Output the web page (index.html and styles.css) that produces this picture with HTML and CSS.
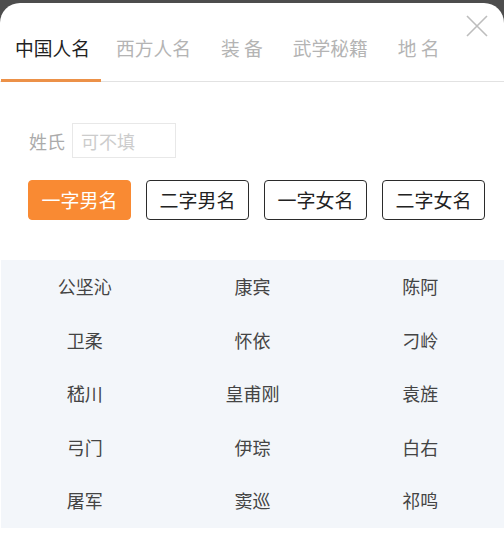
FILE: index.html
```html
<!DOCTYPE html>
<html>
<head>
<meta charset="utf-8">
<title>随机取名</title>
<link rel="stylesheet" href="styles.css">
</head>
<body>
	<div class="sheet">
		<div class="close">
			<svg width="24" height="24" viewBox="0 0 24 24"><path d="M2 2 L22 22 M22 2 L2 22" stroke="#bdbdbd" stroke-width="1.6" fill="none"/></svg>
		</div>

		<div class="tabs">
			<div class="tab active">中国人名</div>
			<div class="tab">西方人名</div>
			<div class="tab">装 备</div>
			<div class="tab">武学秘籍</div>
			<div class="tab">地 名</div>
		</div>

		<div class="surname">
			<span class="label">姓氏</span>
			<input class="field" type="text" placeholder="可不填">
		</div>

		<div class="kinds">
			<div class="kind selected">一字男名</div>
			<div class="kind">二字男名</div>
			<div class="kind">一字女名</div>
			<div class="kind">二字女名</div>
		</div>

		<div class="names">
			<div class="name">公坚沁</div>
			<div class="name">康宾</div>
			<div class="name">陈阿</div>
			<div class="name">卫柔</div>
			<div class="name">怀依</div>
			<div class="name">刁岭</div>
			<div class="name">嵇川</div>
			<div class="name">皇甫刚</div>
			<div class="name">袁旌</div>
			<div class="name">弓门</div>
			<div class="name">伊琮</div>
			<div class="name">白右</div>
			<div class="name">屠军</div>
			<div class="name">窦巡</div>
			<div class="name">祁鸣</div>
		</div>
	</div>
</body>
</html>
```

FILE: styles.css
```css
html, body
   {
   	margin			:  0 ;
   	padding			:  0 ;
   	background		:  #4d4d4d ;
   	font-family		:  "Noto Sans CJK SC", "Noto Sans", sans-serif ;
    }

.sheet
   {
   	position		:  relative ;
   	margin-top		:  3px ;
   	height			:  555px ;
   	background		:  #ffffff ;
   	border-radius		:  20px 20px 0 0 ;
   	overflow		:  hidden ;
    }

.close
   {
   	position		:  absolute ;
   	top			:  11px ;
   	left			:  465px ;
   	width			:  24px ;
   	height			:  24px ;
    }

.close svg
   {
   	display			:  block ;
    }

.tabs
   {
   	display			:  flex ;
   	border-bottom		:  1px solid #e2e2e2 ;
    }

.tab
   {
   	padding			:  32px 15px 18px 15px ;
   	margin-bottom		:  -1px ;
   	line-height		:  26px ;
   	font-size		:  18.75px ;
   	color			:  #b4b4b4 ;
   	border-bottom		:  3px solid transparent ;
   	white-space		:  pre ;
    }

.tab.active
   {
   	padding-left		:  14px ;
   	padding-right		:  11px ;
   	margin-left		:  1px ;
   	color			:  #222222 ;
   	border-bottom-color	:  #ec9148 ;
    }

.surname
   {
   	display			:  flex ;
   	align-items		:  center ;
   	gap			:  7px ;
   	margin			:  41px 0 0 29px ;
    }

.label
   {
   	font-size		:  18px ;
   	color			:  #ababab ;
    }

.field
   {
   	box-sizing		:  border-box ;
   	width			:  104px ;
   	height			:  35px ;
   	margin			:  0 ;
   	padding			:  0 8px ;
   	border			:  1px solid #e8e8e8 ;
   	outline			:  none ;
   	font-family		:  inherit ;
   	font-size		:  18px ;
   	color			:  #333333 ;
    }

.field::placeholder
   {
   	color			:  #cccccc ;
    }

.kinds
   {
   	display			:  flex ;
   	gap			:  15px ;
   	margin			:  22px 0 0 28px ;
    }

.kind
   {
   	box-sizing		:  border-box ;
   	width			:  103px ;
   	height			:  40px ;
   	line-height		:  38px ;
   	text-align		:  center ;
   	font-size		:  19px ;
   	color			:  #222222 ;
   	border			:  1px solid #2b2b2b ;
   	border-radius		:  4px ;
    }

.kind.selected
   {
   	background		:  #f98a33 ;
   	border-color		:  #f98a33 ;
   	color			:  #ffffff ;
    }

.names
   {
   	display			:  grid ;
   	grid-template-columns	:  repeat(3, 1fr) ;
   	margin			:  40px 0 0 1px ;
   	background		:  #f3f6fa ;
    }

.name
   {
   	height			:  53.5px ;
   	line-height		:  53.5px ;
   	text-align		:  center ;
   	font-size		:  18px ;
   	color			:  #444444 ;
    }
```
